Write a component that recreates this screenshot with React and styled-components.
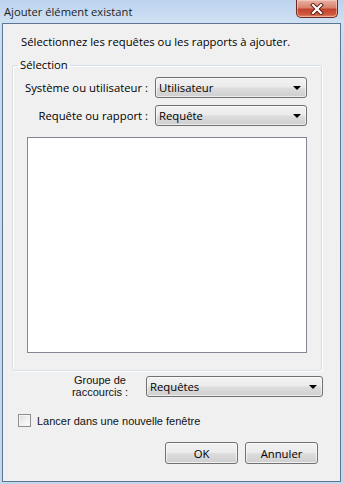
import styled, { createGlobalStyle } from "styled-components";

const GlobalStyle = createGlobalStyle`
  html, body {
    margin: 0;
    padding: 0;
    background: #c6d9ee;
  }
  * {
    box-sizing: border-box;
  }
`;

const ui = `"Open Sans", "Noto Sans", sans-serif`;
const classic = `"Liberation Sans", Arial, sans-serif`;

const Window = styled.div`
  width: 344px;
  height: 484px;
  display: flex;
  flex-direction: column;
  background: linear-gradient(180deg, #bcd3ee 0px, #cfe0f3 22px, #c6d9ee 60px, #c3d7ed 100%);
  font-family: ${ui};
  color: #000;
`;

const TitleBar = styled.div`
  height: 23px;
  display: flex;
  align-items: flex-start;
  justify-content: space-between;
  padding-left: 4px;
`;

const Title = styled.span`
  font-size: 11.2px;
  line-height: 23px;
  color: #1e1e1e;
`;

const CloseButton = styled.div`
  width: 42px;
  height: 18px;
  margin-right: 6px;
  border: 1px solid #6e2b24;
  border-top: none;
  border-radius: 0 0 5px 5px;
  background: linear-gradient(180deg, #eab2a4 0%, #d7826c 45%, #c2442d 55%, #cf5a3d 85%, #e08a6e 100%);
  box-shadow: inset 0 0 0 1px rgba(255, 220, 210, 0.5);
  display: flex;
  align-items: center;
  justify-content: center;
`;

const Client = styled.div`
  flex: 1;
  margin: 0 3px 2px 2px;
  border: 1px solid #5e7593;
  background: #f0f0f0;
  display: flex;
  flex-direction: column;
  padding: 0 0 0 9px;
`;

const Instruction = styled.p`
  margin: 10px 0 0 9px;
  font-size: 11.3px;
  line-height: 15px;
`;

const Group = styled.fieldset`
  margin: 9px 0 0 0;
  width: 310px;
  height: 313px;
  padding: 0;
  border: 1px solid #d5dfe5;
  border-radius: 3px;
  box-shadow: inset 1px 1px 0 #fff, 1px 1px 0 #fff;
  display: flex;
  flex-direction: column;
`;

const Legend = styled.legend`
  margin-left: 5px;
  padding: 0 2px;
  font-size: 11.3px;
  line-height: 14px;
`;

const FieldRow = styled.div`
  display: flex;
  align-items: center;
  margin-top: ${(p) => p.$top}px;
`;

const Label = styled.label`
  width: 142px;
  text-align: right;
  font-size: 11.3px;
  padding-right: 7px;
  white-space: nowrap;
`;

const Combo = styled.div`
  width: ${(p) => p.$width}px;
  height: 21px;
  border: 1px solid #707070;
  border-radius: 3px;
  background: linear-gradient(180deg, #f2f2f2 0%, #ebebeb 48%, #dddddd 52%, #cfcfcf 100%);
  box-shadow: inset 0 0 0 1px rgba(255, 255, 255, 0.6);
  display: flex;
  align-items: center;
  justify-content: space-between;
  padding: 0 5px 0 3px;
  font-size: 11.3px;
`;

const Arrow = styled.span`
  width: 0;
  height: 0;
  border-left: 4px solid transparent;
  border-right: 4px solid transparent;
  border-top: 4px solid #000;
  margin-top: 1px;
`;

const ListBox = styled.div`
  width: 280px;
  height: 216px;
  margin: 11px 0 0 14px;
  background: #fff;
  border: 1px solid #828790;
`;

const ShortcutRow = styled.div`
  display: flex;
  align-items: center;
  margin-top: 3px;
`;

const ShortcutLabel = styled.div`
  width: 118px;
  padding-left: 58px;
  text-align: center;
  font-family: ${classic};
  font-size: 11px;
  line-height: 12px;
  color: #111;
  margin-right: 16px;
`;

const CheckRow = styled.label`
  display: flex;
  align-items: center;
  gap: 6px;
  margin: 16px 0 0 6px;
  font-family: ${classic};
  font-size: 11px;
  color: #111;
`;

const Box = styled.span`
  width: 13px;
  height: 13px;
  border: 1px solid #8e8f8f;
  background: linear-gradient(135deg, #dcdcdc 0%, #f3f3f3 60%, #fbfbfb 100%);
  box-shadow: inset 0 0 0 1px #f4f4f4;
`;

const Buttons = styled.div`
  display: flex;
  justify-content: flex-end;
  gap: 7px;
  margin: 15px 22px 0 0;
`;

const Button = styled.button`
  width: 73px;
  height: 22px;
  padding: 0;
  border: 1px solid #707070;
  border-radius: 3px;
  background: linear-gradient(180deg, #f2f2f2 0%, #ebebeb 48%, #dddddd 52%, #cfcfcf 100%);
  box-shadow: inset 0 0 0 1px rgba(255, 255, 255, 0.7);
  font-family: ${ui};
  font-size: 11.3px;
  color: #000;
`;

export default function App() {
  return (
    <>
      <GlobalStyle />
      <Window>
        <TitleBar>
          <Title>Ajouter élément existant</Title>
          <CloseButton>
            <svg width="14" height="12" viewBox="0 0 14 12">
              <path d="M3 2 L11 10 M11 2 L3 10" stroke="#5a1a12" strokeWidth="4" strokeLinecap="square" />
              <path d="M3 2 L11 10 M11 2 L3 10" stroke="#fff" strokeWidth="2.2" strokeLinecap="square" />
            </svg>
          </CloseButton>
        </TitleBar>
        <Client>
          <Instruction>Sélectionnez les requêtes ou les rapports à ajouter.</Instruction>
          <Group>
            <Legend>Sélection</Legend>
            <FieldRow $top={5}>
              <Label>Système ou utilisateur :</Label>
              <Combo $width={152}>
                Utilisateur
                <Arrow />
              </Combo>
            </FieldRow>
            <FieldRow $top={7}>
              <Label>Requête ou rapport :</Label>
              <Combo $width={152}>
                Requête
                <Arrow />
              </Combo>
            </FieldRow>
            <ListBox />
          </Group>
          <ShortcutRow>
            <ShortcutLabel>
              Groupe de
              <br />
              raccourcis :
            </ShortcutLabel>
            <Combo $width={177}>
              Requêtes
              <Arrow />
            </Combo>
          </ShortcutRow>
          <CheckRow>
            <Box />
            Lancer dans une nouvelle fenêtre
          </CheckRow>
          <Buttons>
            <Button>OK</Button>
            <Button>Annuler</Button>
          </Buttons>
        </Client>
      </Window>
    </>
  );
}
